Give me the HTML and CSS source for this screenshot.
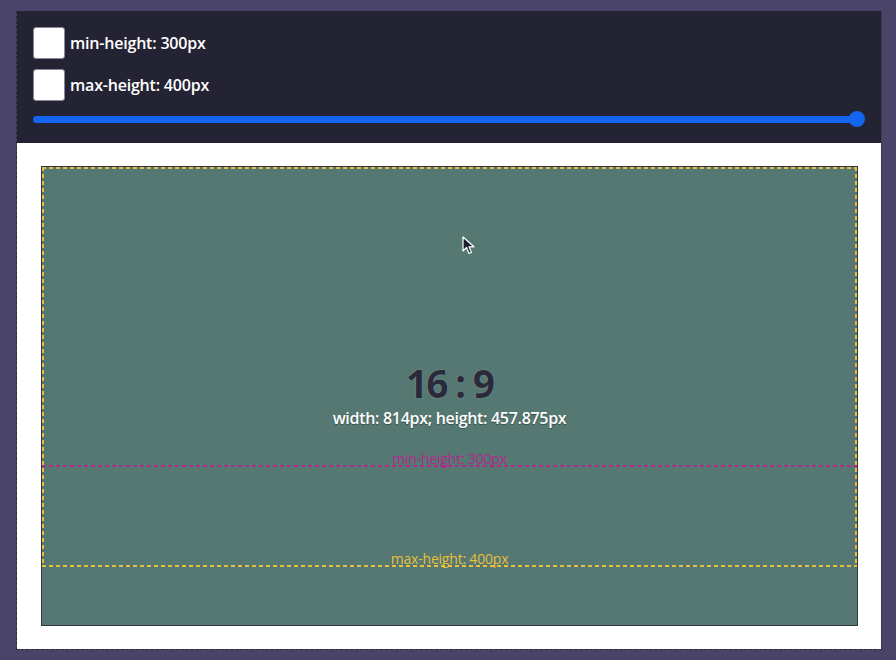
FILE: index.html
```html
<!DOCTYPE html>
<html>
<head>
<meta charset="utf-8">
<link rel="stylesheet" href="styles.css">
</head>
<body>
<div class="frame">
  <div class="controls">
    <label class="opt"><span class="box"></span><span class="opt-text">min-height: 300px</span></label>
    <label class="opt"><span class="box"></span><span class="opt-text">max-height: 400px</span></label>
    <div class="slider"><div class="track"></div><div class="thumb"></div></div>
  </div>
  <div class="stage">
    <div class="ratio">
      <div class="maxbox">
        <div class="dash-h dash-top"></div>
        <div class="dash-v dash-left"></div>
        <div class="dash-v dash-right"></div>
        <div class="dash-h dash-bottom"></div>
        <span class="maxlabel">max-height: 400px</span>
      </div>
      <div class="minline"><span class="minlabel">min-height: 300px</span></div>
      <div class="info">
        <div class="big">16 : 9</div>
        <div class="dims">width: 814px; height: 457.875px</div>
      </div>
      <svg class="cursor" width="14" height="20" viewBox="0 0 14 20"><path d="M1 1 L1 15 L4.5 11.5 L7 17.5 L9.5 16.5 L7 10.8 L12 10.8 Z" fill="#1e1d2b" stroke="#fff" stroke-width="1.2" stroke-linejoin="round"/></svg>
    </div>
  </div>
</div>
</body>
</html>
```
FILE: styles.css
```css
html, body { margin: 0; padding: 0; }
body {
  background: #4a4568;
  width: 896px;
  height: 660px;
  overflow: hidden;
  font-family: "Open Sans", "Noto Sans", sans-serif;
}
.frame {
  margin: 11px 0 0 16px;
  width: 864px;
  border-left: 1px dashed #2e2d3a;
  border-bottom: 1px dashed #2e2d3a;
  border-right: 1px solid #3b3850;
}
.controls {
  background: #242333;
  padding: 16px 24px 16px 16px;
  display: flex;
  flex-direction: column;
  gap: 10px;
}
.opt {
  display: flex;
  align-items: center;
  gap: 5px;
  height: 32px;
}
.box {
  width: 30px;
  height: 30px;
  background: #fff;
  border: 1px solid #8a8a9a;
  border-radius: 3px;
}
.opt-text {
  color: #fff;
  font-size: 16px;
  font-weight: 600;
  letter-spacing: -0.2px;
}
.slider {
  position: relative;
  height: 16px;
  display: flex;
  align-items: center;
}
.track {
  flex: 1;
  height: 7px;
  background: #1466f0;
  border-radius: 4px;
}
.thumb {
  position: absolute;
  right: -8px;
  top: 0;
  width: 16px;
  height: 16px;
  border-radius: 50%;
  background: #1466f0;
}
.stage {
  background: #fff;
  padding: 23px 23px 23px 24px;
}
.ratio {
  position: relative;
  height: 457.875px;
  background: #557873;
  border: 1px solid #343440;
  display: flex;
  align-items: center;
  justify-content: center;
}
.maxbox {
  position: absolute;
  left: 0; right: 0; top: 0;
  height: 400px;
}
.dash-h {
  position: absolute;
  left: 0; right: 0;
  height: 2px;
  background: repeating-linear-gradient(90deg, #e8bf3c 0 4px, transparent 4px 7px);
}
.dash-v {
  position: absolute;
  top: 0; bottom: 0;
  width: 2px;
  background: repeating-linear-gradient(180deg, #e8bf3c 0 4px, transparent 4px 7px);
}
.dash-top { top: 0; }
.dash-bottom { bottom: 0; }
.dash-left { left: 0; }
.dash-right { right: 0; }
.maxlabel {
  position: absolute;
  left: 0; right: 0; bottom: 0;
  text-align: center;
  color: #e8bf3c;
  font-size: 14px;
  letter-spacing: -0.2px;
  line-height: 16px;
}
.minline {
  position: absolute;
  left: 0; right: 0; top: 298px;
  height: 2px;
  background: repeating-linear-gradient(90deg, #b02a8c 0 4px, transparent 4px 7px);
}
.minlabel {
  position: absolute;
  left: 0; right: 0; bottom: 0;
  text-align: center;
  color: #b02a8c;
  font-size: 14px;
  letter-spacing: -0.2px;
  line-height: 16px;
}
.info {
  display: flex;
  flex-direction: column;
  align-items: center;
  margin-top: -2px;
}
.big {
  font-size: 39px;
  font-weight: 700;
  color: #2a2a3b;
  letter-spacing: -1.8px;
  line-height: 44px;
  text-shadow: 0 0 1px rgba(255,255,255,0.5);
}
.dims {
  margin-top: 3px;
  color: #fff;
  font-size: 16px;
  font-weight: 600;
  letter-spacing: -0.3px;
  line-height: 20px;
  text-shadow: 0 1px 1px rgba(0,0,0,0.35);
}
.cursor {
  position: absolute;
  left: 420px;
  top: 69px;
}
```
